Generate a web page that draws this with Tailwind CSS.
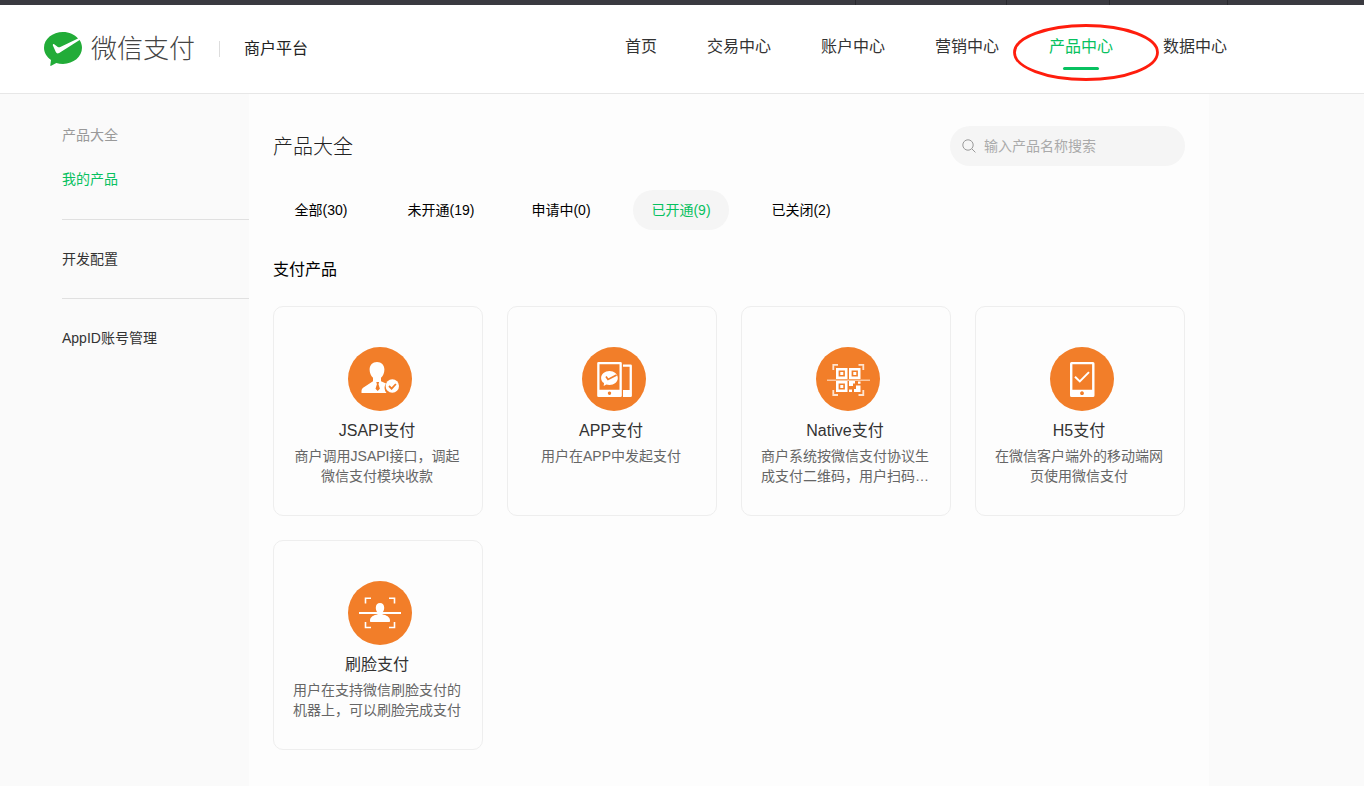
<!DOCTYPE html>
<html lang="zh-CN">
<head>
<meta charset="utf-8">
<meta name="viewport" content="width=device-width, initial-scale=1">
<title>微信支付 商户平台</title>
<script src="https://cdn.jsdelivr.net/npm/@tailwindcss/browser@4"></script>
</head>
<body class="flex min-h-screen flex-col bg-[#fafafa] font-['Liberation_Sans','Noto_Sans_CJK_SC',sans-serif] text-[#333]">
  <div class="flex h-[5px] shrink-0 justify-end bg-[#3a3a40] pr-[136px]">
    <span class="w-[151px] border-l border-[#29292e]"></span>
    <span class="w-[103px] border-l border-[#29292e]"></span>
    <span class="w-[119px] border-x border-[#29292e]"></span>
  </div>

  <header class="flex h-[89px] shrink-0 items-start justify-between border-b border-[#e7e7e7] bg-white pr-[137px] pl-11">
    <div class="flex h-[87px] items-center">
      <a href="#" class="flex items-center gap-[9px]">
        <svg class="h-[34px] w-[38px]" viewBox="0 0 38 34" aria-hidden="true">
          <path fill="#22ac38" d="M19 0C8.500 0 0 7 0 15.800c0 4.900 2.700 9.200 7 12.100L6.300 33.200c-.1.700.4 1 .9.600L12.300 31c2.100.6 4.300.9 6.700.9 10.500 0 19-7.200 19-16.100 0-2.900-.9-5.600-2.400-7.900L15.200 21c-1.600.9-2.700.5-3.400-.9L8.900 13.400c-.4-1 .4-1.700 1.300-1.100l3.600 2.600c.8.500 1.600.6 2.500.2L34 6.500C30.600 2.500 25.200 0 19 0Z"/>
        </svg>
        <span class="text-[26px] leading-8 font-light text-[#444]">微信支付</span>
      </a>
      <span class="ml-6 h-4 w-px bg-[#ddd]"></span>
      <span class="ml-6 text-base text-[#222]">商户平台</span>
    </div>
    <nav class="flex gap-[50px] pt-[30px] text-base whitespace-nowrap" aria-label="主导航">
      <a href="#">首页</a>
      <a href="#">交易中心</a>
      <a href="#">账户中心</a>
      <a href="#">营销中心</a>
      <a href="#" class="relative flex flex-col items-center gap-2 text-[#07c160]" aria-current="page">
        产品中心
        <span class="h-[3px] w-9 rounded-full bg-[#07c160]"></span>
        <svg class="absolute -top-[11px] -left-9 h-[57px] w-[146px]" viewBox="0 0 146 57" aria-hidden="true">
          <ellipse cx="73" cy="28.500" rx="71.500" ry="27" fill="none" stroke="#ff1d0d" stroke-width="2.800"/>
        </svg>
      </a>
      <a href="#">数据中心</a>
    </nav>
  </header>

  <div class="flex flex-1">
    <aside class="w-[249px] shrink-0 pl-[62px] text-sm">
      <nav aria-label="产品菜单">
        <div class="border-b border-[#e0e0e0] pt-[19px] pb-[18px]">
          <a href="#" class="flex h-11 items-center text-[#999]">产品大全</a>
          <a href="#" class="flex h-11 items-center text-[#07c160]" aria-current="page">我的产品</a>
        </div>
        <div class="border-b border-[#e0e0e0]">
          <a href="#" class="flex h-[78px] items-center">开发配置</a>
        </div>
        <a href="#" class="flex h-[78px] items-center">AppID账号管理</a>
      </nav>
    </aside>

    <main class="max-w-[960px] flex-1 bg-[#fdfdfd] px-6 pt-8 pb-9">
      <div class="flex items-center justify-between">
        <h1 class="pt-0.5 text-xl font-light text-[#222]">产品大全</h1>
        <label class="flex h-10 w-[235px] items-center gap-2 rounded-full bg-[#f5f5f5] pr-4 pl-3">
          <svg class="size-[14px] shrink-0" viewBox="0 0 14 14" fill="none" stroke="#999" aria-hidden="true">
            <circle cx="6" cy="6" r="5.200"/><path d="m9.800 9.800 3.600 3.600"/>
          </svg>
          <input type="search" aria-label="搜索产品" placeholder="输入产品名称搜索" class="w-full min-w-0 bg-transparent text-sm outline-none placeholder:text-[#aaa]">
        </label>
      </div>

      <div class="mt-6 flex flex-wrap gap-6 text-sm whitespace-nowrap text-black">
        <button type="button" class="h-10 w-24 rounded-full">全部(30)</button>
        <button type="button" class="h-10 w-24 rounded-full">未开通(19)</button>
        <button type="button" class="h-10 w-24 rounded-full">申请中(0)</button>
        <button type="button" class="h-10 w-24 rounded-full bg-[#f5f5f5] text-[#07c160]" aria-pressed="true">已开通(9)</button>
        <button type="button" class="h-10 w-24 rounded-full">已关闭(2)</button>
      </div>

      <h2 class="mt-7 text-base font-normal text-black">支付产品</h2>

      <div class="mt-6 grid grid-cols-[repeat(auto-fill,210px)] gap-6 text-center">
        <a href="#" class="flex h-[210px] flex-col items-center rounded-[10px] border border-[#eee] pt-10 pr-[21px] pl-[19px]">
          <span class="pl-1.5"><svg class="size-16" viewBox="0 0 64 64" aria-hidden="true">
            <circle cx="32" cy="32" r="32" fill="#f27e29"/>
            <path fill="#fff" d="M29 15c4.400 0 7.400 3 7.400 7.500 0 3.600-1.400 6.500-3.400 8.300v3.400l5 2.300a8 8 0 0 0 .5 9.500H13.500v-1.500c0-2 .5-3 1.600-3.800L25 34.200v-3.400c-2-1.800-3.400-4.700-3.400-8.300 0-4.500 3-7.500 7.400-7.500Z"/>
            <path fill="#f27e29" d="M28.300 35h2.800l-.6 2.200 1.400 4.600-2.200 2.200-2.200-2.200 1.400-4.600Z"/>
            <circle cx="44.300" cy="39" r="6.700" fill="#fff"/>
            <path d="m41 39 2.600 2.600 4.300-4.600" fill="none" stroke="#f27e29" stroke-width="1.800"/>
          </svg></span>
          <h3 class="mt-2 text-base font-normal">JSAPI支付</h3>
          <p class="mt-[3px] text-sm text-[#666]">商户调用JSAPI接口，调起微信支付模块收款</p>
        </a>

        <a href="#" class="flex h-[210px] flex-col items-center rounded-[10px] border border-[#eee] pt-10 pr-[21px] pl-[19px]">
          <span class="pl-1.5"><svg class="size-16" viewBox="0 0 64 64" aria-hidden="true">
            <circle cx="32" cy="32" r="32" fill="#f27e29"/>
            <path fill="#fff" fill-rule="evenodd" d="M16.500 15h22a1.300 1.300 0 0 1 1.300 1.300v32.400a1.300 1.300 0 0 1-1.300 1.300h-22a1.300 1.300 0 0 1-1.300-1.300V16.300A1.300 1.300 0 0 1 16.500 15Zm1 2.200v25.600h20V17.200Zm10 27.300a1.700 1.700 0 1 0 .01 0Z"/>
            <path fill="#fff" fill-rule="evenodd" d="M41 17.500h7.600a1.300 1.300 0 0 1 1.300 1.300v29.900a1.300 1.300 0 0 1-1.300 1.300H41v-7h6.600V19.700H41Z"/>
            <path fill="#fff" d="M27.500 24c4.600 0 8.300 3 8.300 6.900s-3.700 7-8.300 7c-1.200 0-2.200-.2-3.200-.5l-2.600 1.500.3-2.800c-1.800-1.200-2.900-3.100-2.900-5.200 0-3.900 3.800-6.900 8.400-6.900Z"/>
            <path d="m24 29.600 2 2.900 8.600-4.500" fill="none" stroke="#f27e29" stroke-width="1.700"/>
          </svg></span>
          <h3 class="mt-2 text-base font-normal">APP支付</h3>
          <p class="mt-[3px] text-sm text-[#666]">用户在APP中发起支付</p>
        </a>

        <a href="#" class="flex h-[210px] flex-col items-center rounded-[10px] border border-[#eee] pt-10 pr-[21px] pl-[19px]">
          <span class="pl-1.5"><svg class="size-16" viewBox="0 0 64 64" aria-hidden="true">
            <circle cx="32" cy="32" r="32" fill="#f27e29"/>
            <path d="M17.300 23v-5.200H22M42.500 17.800h4.800V23M17.300 43v5H22M42.500 48h4.800v-5" fill="none" stroke="#fde3cf" stroke-width="1.800"/>
            <path fill="#fff" fill-rule="evenodd" d="M20 21h11.500v11H20Zm2.600 2.500v6h6.300v-6ZM33 21h11.500v11H33Zm2.600 2.500v6h6.300v-6ZM20 34h11.500v11H20Zm2.600 2.500v6h6.300v-6Z"/>
            <path fill="#fff" d="M24.300 25h3v3h-3ZM37.300 25h3v3h-3ZM24.300 38h3v3h-3ZM33 34h6v2.500h-2v2.500h-4ZM42 34.500h2.500v2.300H42ZM40 38.500h4.500V45H38v-3h2ZM33 42.500h3V45h-3Z"/>
            <path d="M11 33.200h43" stroke="#fbc79f" stroke-width="1.600"/>
          </svg></span>
          <h3 class="mt-2 text-base font-normal">Native支付</h3>
          <p class="mt-[3px] text-sm text-[#666]">商户系统按微信支付协议生成支付二维码，用户扫码…</p>
        </a>

        <a href="#" class="flex h-[210px] flex-col items-center rounded-[10px] border border-[#eee] pt-10 pr-[21px] pl-[19px]">
          <span class="pl-1.5"><svg class="size-16" viewBox="0 0 64 64" aria-hidden="true">
            <circle cx="32" cy="32" r="32" fill="#f27e29"/>
            <path fill="#fff" fill-rule="evenodd" d="M21.500 15h21.500a1.500 1.500 0 0 1 1.500 1.500v32a1.500 1.500 0 0 1-1.500 1.500H21.500a1.500 1.500 0 0 1-1.500-1.500v-32a1.500 1.500 0 0 1 1.500-1.500Zm.9 2.300v25.500h19.700V17.300ZM32 44.300a1.900 1.900 0 1 0 .01 0Z"/>
            <path d="m25 29.800 4.800 4.600 9.200-9.300" fill="none" stroke="#fff" stroke-width="2"/>
          </svg></span>
          <h3 class="mt-2 text-base font-normal">H5支付</h3>
          <p class="mt-[3px] text-sm text-[#666]">在微信客户端外的移动端网页使用微信支付</p>
        </a>

        <a href="#" class="flex h-[210px] flex-col items-center rounded-[10px] border border-[#eee] pt-10 pr-[21px] pl-[19px]">
          <span class="pl-1.5"><svg class="size-16" viewBox="0 0 64 64" aria-hidden="true">
            <circle cx="32" cy="32" r="32" fill="#f27e29"/>
            <path d="M17.500 22.500v-5.200H23M41 17.300h5.500v5.200M17.500 41v5.500H23M41 46.500h5.500V41" fill="none" stroke="#fff" stroke-width="1.600"/>
            <path d="M11 32h42" stroke="#fff" stroke-width="2"/>
            <path fill="#fff" d="M32 22c2.600 0 4.200 1.900 4.200 4.700 0 2-.7 3.800-1.900 4.900v1.600c4 1 7.700 2.500 7.700 6.300v.5c0 .6-.4 1-1 1H23c-.6 0-1-.4-1-1v-.5c0-3.800 3.700-5.300 7.700-6.300v-1.600c-1.200-1.100-1.900-2.900-1.900-4.900 0-2.800 1.600-4.700 4.200-4.700Z"/>
          </svg></span>
          <h3 class="mt-2 text-base font-normal">刷脸支付</h3>
          <p class="mt-[3px] text-sm text-[#666]">用户在支持微信刷脸支付的机器上，可以刷脸完成支付</p>
        </a>
      </div>
    </main>
  </div>
</body>
</html>
